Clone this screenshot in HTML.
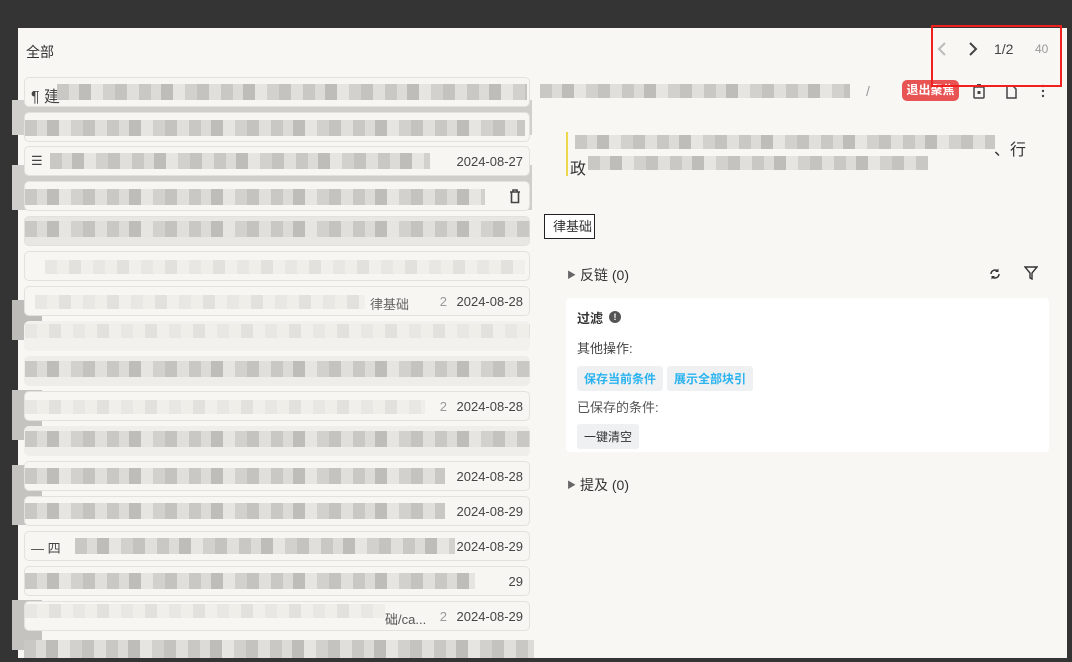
<!DOCTYPE html>
<html><head><meta charset="utf-8">
<style>
*{box-sizing:border-box;margin:0;padding:0}
body{width:1072px;height:662px;background:#343434;font-family:"Liberation Sans","Noto Sans CJK SC",sans-serif;position:relative;overflow:hidden;color:#333}
.panel{position:absolute;left:18px;top:28px;width:1049px;height:630px;background:#f8f7f4}
.title{position:absolute;left:26px;top:42px;font-size:14px;color:#333}
.card{position:absolute;left:24px;width:506px;height:30px;border:1px solid #e2e1dd;border-radius:5px;background:#f7f6f3;font-size:13px;color:#444}
.mos{position:absolute;height:16px;background:repeating-linear-gradient(90deg,#c9c8c4 0 12px,#dcdbd7 12px 22px,#bebdb9 22px 34px,#e6e5e1 34px 46px,#d2d1cd 46px 58px,#c4c3bf 58px 70px,#e0dfdb 70px 82px)}
.mos2{position:absolute;height:14px;background:repeating-linear-gradient(90deg,#e8e7e3 0 12px,#efeee9 12px 24px,#e2e1dd 24px 36px,#f0efeb 36px 48px)}
.date{position:absolute;right:6px;top:7px;color:#444}
.num{position:absolute;right:82px;top:7px;color:#999}
.smear{position:absolute;background:#f1f0ed}
.right{position:absolute;font-size:14px}
.btn{display:inline-block;background:#eef0f2;border-radius:3px;padding:4px 7px;font-size:12px;font-weight:bold;color:#2bb3f0;margin-right:4px}
</style></head><body>
<div class="panel"></div>
<div class="title">全部</div>

<div class="smear" style="left:12px;top:100px;width:520px;height:35px;background:#d0cfcb"></div>
<div class="smear" style="left:12px;top:165px;width:520px;height:45px;background:#cfcecb"></div>
<div class="smear" style="left:12px;top:300px;width:30px;height:40px;background:#bdbcb9"></div>
<div class="smear" style="left:12px;top:390px;width:30px;height:50px;background:#c4c3c0"></div>
<div class="smear" style="left:12px;top:465px;width:30px;height:60px;background:#c4c3c0"></div>
<div class="smear" style="left:12px;top:600px;width:30px;height:50px;background:#c4c3c0"></div>

<div class="card" style="top:77px"><span style="position:absolute;left:6px;top:5px;font-size:16px">¶ 建</span><div class="mos" style="left:32px;top:6px;width:470px"></div></div>
<div class="card" style="top:112px"><div class="mos" style="left:0;top:7px;width:500px"></div></div>
<div class="card" style="top:146px"><span style="position:absolute;left:6px;top:6px">☰</span><div class="mos" style="left:25px;top:6px;width:380px"></div><span class="date">2024-08-27</span></div>
<div class="card" style="top:181px"><div class="mos" style="left:0;top:7px;width:460px"></div><svg style="position:absolute;right:8px;top:7px" width="12" height="15"><path d="M1 3h10M4 3V1h4v2M2.5 3.5v10h7v-10" fill="none" stroke="#444" stroke-width="1.6"/></svg></div>
<div class="card" style="top:216px;background:#e8e7e3"><div class="mos" style="left:0;top:4px;width:505px"></div></div>
<div class="card" style="top:251px"><div class="mos2" style="left:20px;top:8px;width:480px"></div></div>
<div class="card" style="top:286px"><div class="mos2" style="left:10px;top:8px;width:330px"></div><span style="position:absolute;left:345px;top:7px;color:#666">律基础</span><span class="num">2</span><span class="date">2024-08-28</span></div>
<div class="card" style="top:321px;border-color:transparent;background:#f2f1ee"><div class="mos2" style="left:0;top:2px;width:505px"></div></div>
<div class="card" style="top:356px;border-color:transparent;background:#eeede9"><div class="mos" style="left:0;top:4px;width:505px"></div></div>
<div class="card" style="top:391px"><div class="mos2" style="left:0;top:8px;width:400px"></div><span class="num">2</span><span class="date">2024-08-28</span></div>
<div class="card" style="top:426px;border-color:transparent;background:#efeeea"><div class="mos" style="left:0;top:4px;width:505px"></div></div>
<div class="card" style="top:461px"><div class="mos" style="left:0;top:6px;width:420px"></div><span class="date">2024-08-28</span></div>
<div class="card" style="top:496px"><div class="mos" style="left:0;top:6px;width:420px"></div><span class="date">2024-08-29</span></div>
<div class="card" style="top:531px"><span style="position:absolute;left:6px;top:6px">— 四</span><div class="mos" style="left:50px;top:6px;width:380px"></div><span class="date">2024-08-29</span></div>
<div class="card" style="top:566px"><div class="mos" style="left:0;top:6px;width:450px"></div><span class="date">29</span></div>
<div class="card" style="top:601px"><div class="mos2" style="left:0;top:2px;width:360px"></div><span style="position:absolute;left:360px;top:7px;color:#555">础/ca...</span><span class="num">2</span><span class="date">2024-08-29</span></div>
<div class="mos" style="left:24px;top:640px;width:510px;height:18px"></div>

<div class="mos" style="left:540px;top:84px;width:310px;height:14px"></div>
<span class="right" style="left:866px;top:83px;color:#999">/</span>
<div style="position:absolute;left:902px;top:80px;width:57px;height:21px;background:#e85454;border-radius:5px;color:#fff;font-size:12px;font-weight:bold;text-align:center;line-height:21px">退出聚焦</div>
<svg style="position:absolute;left:972px;top:83px" width="14" height="16"><rect x="2" y="4" width="10" height="11" rx="1" fill="none" stroke="#444" stroke-width="1.5"/><rect x="5" y="1" width="4" height="3" fill="#444"/><rect x="5.5" y="8" width="3" height="3" fill="#444"/></svg>
<svg style="position:absolute;left:1004px;top:83px" width="14" height="16"><path d="M3 3h6l3 3v9H3z" fill="none" stroke="#444" stroke-width="1.5"/></svg>
<svg style="position:absolute;left:1040px;top:84px" width="6" height="14"><circle cx="3" cy="2" r="1.2" fill="#444"/><circle cx="3" cy="7" r="1.2" fill="#444"/><circle cx="3" cy="12" r="1.2" fill="#444"/></svg>

<div style="position:absolute;left:566px;top:132px;width:2px;height:44px;background:#f0d64a"></div>
<div class="mos" style="left:575px;top:135px;width:420px;height:14px"></div>
<span class="right" style="left:994px;top:136px;font-size:16px;color:#333">、行</span>
<span class="right" style="left:570px;top:155px;font-size:16px;color:#333">政</span>
<div class="mos" style="left:588px;top:156px;width:340px;height:14px"></div>
<div style="position:absolute;left:544px;top:214px;width:51px;height:25px;border:1px solid #222;background:#fff;font-size:13px;line-height:23px;padding-left:8px">律基础</div>

<span class="right" style="left:567px;top:268px;font-size:9px;color:#666">▶</span>
<span class="right" style="left:580px;top:265px;color:#333">反链 (0)</span>
<svg style="position:absolute;left:988px;top:267px" width="14" height="14"><path d="M3 7a4 4 0 0 1 7-2.6M11 7a4 4 0 0 1-7 2.6" fill="none" stroke="#333" stroke-width="1.5"/><path d="M10.5 1.5v3.5H7zM3.5 12.5V9H7z" fill="#333"/></svg>
<svg style="position:absolute;left:1024px;top:266px" width="14" height="14"><path d="M1 1h12L8 7v6L6 12V7z" fill="none" stroke="#333" stroke-width="1.4"/></svg>

<div style="position:absolute;left:566px;top:298px;width:483px;height:154px;background:#fff;border-radius:4px"></div>
<span class="right" style="left:577px;top:308px;font-size:13px;font-weight:bold;color:#333">过滤</span>
<div style="position:absolute;left:609px;top:311px;width:12px;height:12px;border-radius:6px;background:#555;color:#fff;font-size:9px;text-align:center;line-height:12px;font-weight:bold">!</div>
<span class="right" style="left:577px;top:338px;font-size:13px;color:#444">其他操作:</span>
<div style="position:absolute;left:577px;top:366px"><span class="btn">保存当前条件</span><span class="btn">展示全部块引</span></div>
<span class="right" style="left:577px;top:397px;font-size:13px;color:#555">已保存的条件:</span>
<div style="position:absolute;left:577px;top:424px"><span class="btn" style="color:#333;font-weight:normal">一键清空</span></div>

<span class="right" style="left:567px;top:478px;font-size:9px;color:#666">▶</span>
<span class="right" style="left:580px;top:475px;color:#333">提及 (0)</span>

<svg style="position:absolute;left:935px;top:41px" width="14" height="16"><path d="M10 2L4 8l6 6" fill="none" stroke="#bbb" stroke-width="2"/></svg>
<svg style="position:absolute;left:966px;top:41px" width="14" height="16"><path d="M4 2l6 6-6 6" fill="none" stroke="#444" stroke-width="2"/></svg>
<span class="right" style="left:994px;top:41px;color:#444">1/2</span>
<span class="right" style="left:1035px;top:42px;font-size:12px;color:#999">40</span>
<div style="position:absolute;left:931px;top:25px;width:131px;height:62px;border:2px solid #f0201e"></div>
</body></html>
